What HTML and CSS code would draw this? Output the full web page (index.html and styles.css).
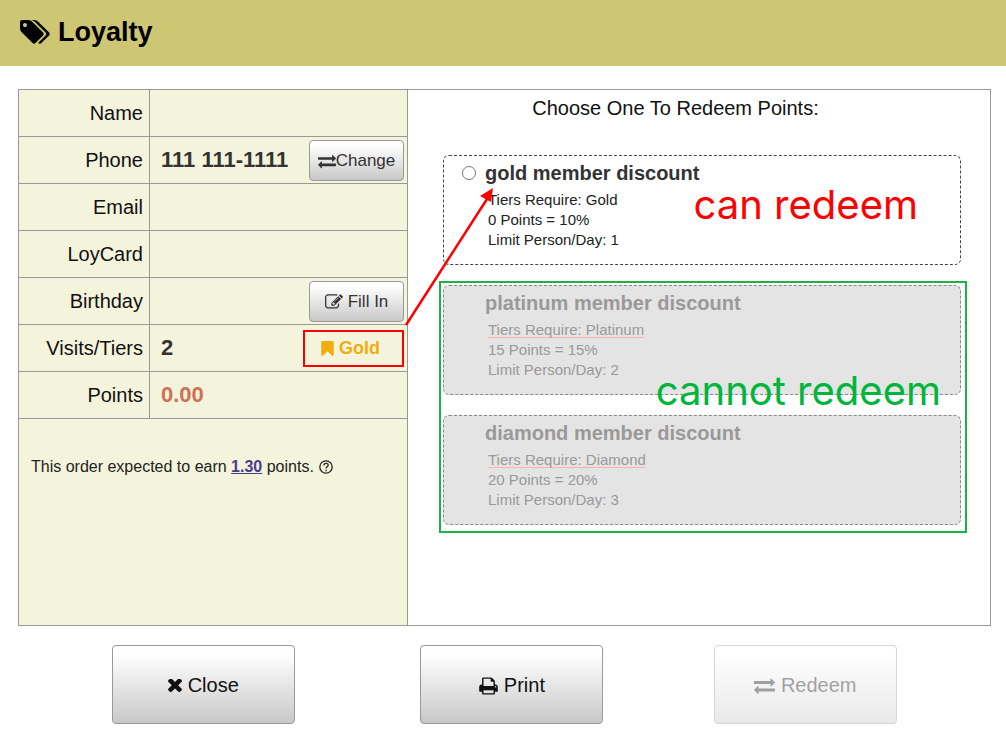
FILE: index.html
```
<!DOCTYPE html>
<html lang="en">
<head>
  <meta charset="UTF-8">
  <meta name="viewport" content="width=device-width, initial-scale=1.0">
  <title>Loyalty</title>
  <link rel="stylesheet" href="styles.css">
</head>
<body>
  <header class="header">
    <svg class="icon-tags" viewBox="0 0 1920 1792"><path d="M448 448q0-53-37.500-90.500t-90.500-37.500-90.500 37.500-37.500 90.500 37.500 90.500 90.500 37.500 90.500-37.500 37.500-90.500zm1067 576q0 53-37 90l-491 492q-39 37-91 37-53 0-90-37l-715-716q-38-37-64.500-101t-26.500-117v-416q0-52 38-90t90-38h416q53 0 117 26.500t102 64.500l715 714q37 39 37 91zm384 0q0 53-37 90l-491 492q-39 37-91 37-36 0-59-14t-53-45l470-470q37-37 37-90 0-52-37-91l-715-714q-38-38-102-64.500t-117-26.500h224q53 0 117 26.500t102 64.500l715 714q37 39 37 91z"/></svg>
    <h1>Loyalty</h1>
  </header>

  <main class="panel">
    <section class="member">
      <table class="info">
        <tr><th scope="row">Name</th><td></td></tr>
        <tr>
          <th scope="row">Phone</th>
          <td>
            <div class="value">
              <b>111 111-1111</b>
              <button class="btn btn-small" type="button">
                <svg class="icon-exchange" viewBox="0 0 1792 1792"><path d="M1792 1184v192q0 13-9.500 22.500t-22.500 9.500h-1376v192q0 13-9.500 22.500t-22.500 9.500q-12 0-24-10l-319-320q-9-9-9-22 0-14 9-23l320-320q9-9 23-9 13 0 22.500 9.500t9.500 22.500v192h1376q13 0 22.500 9.500t9.500 22.500zm0-544q0 14-9 23l-320 320q-9 9-23 9-13 0-22.500-9.500t-9.500-22.500v-192h-1376q-13 0-22.500-9.500t-9.500-22.500v-192q0-13 9.500-22.500t22.500-9.500h1376v-192q0-14 9-23t23-9q12 0 24 10l319 319q9 9 9 23z"/></svg><span>Change</span>
              </button>
            </div>
          </td>
        </tr>
        <tr><th scope="row">Email</th><td></td></tr>
        <tr><th scope="row">LoyCard</th><td></td></tr>
        <tr>
          <th scope="row">Birthday</th>
          <td>
            <div class="value">
              <b></b>
              <button class="btn btn-small btn-spaced" type="button">
                <svg class="icon-edit" viewBox="0 0 1792 1792"><path d="M888 1184l116-116-152-152-116 116v56h96v96h56zm440-720q-16-16-33 1l-350 350q-17 17-1 33t33-1l350-350q17-17 1-33zm80 594v190q0 119-84.500 203.500t-203.500 84.500h-832q-119 0-203.500-84.500t-84.500-203.500v-832q0-119 84.500-203.500t203.500-84.500h832q63 0 117 25 15 7 18 23 3 17-9 29l-49 49q-14 14-32 8-23-6-45-6h-832q-66 0-113 47t-47 113v832q0 66 47 113t113 47h832q66 0 113-47t47-113v-126q0-13 9-22l64-64q15-15 35-7t20 29zm-96-738l288 288-672 672h-288v-288zm444 132l-92 92-288-288 92-92q28-28 68-28t68 28l152 152q28 28 28 68t-28 68z"/></svg><span>Fill In</span>
              </button>
            </div>
          </td>
        </tr>
        <tr>
          <th scope="row">Visits/Tiers</th>
          <td>
            <div class="value">
              <b>2</b>
              <span class="tier">
                <svg class="icon-bookmark" viewBox="256 128 1280 1536"><path d="M1420 128q23 0 44 9 33 13 52.500 41t19.500 62v1289q0 34-19.500 62t-52.500 41q-19 8-44 8-48 0-83-32l-441-424-441 424q-36 33-83 33-23 0-44-9-33-13-52.500-41t-19.500-62v-1289q0-34 19.500-62t52.500-41q21-9 44-9h1048z"/></svg>
                Gold
              </span>
            </div>
          </td>
        </tr>
        <tr><th scope="row">Points</th><td><div class="value"><b class="points">0.00</b></div></td></tr>
      </table>
      <p class="earn">This order expected to earn <a href="#">1.30</a> points.
        <svg class="icon-help" viewBox="0 0 14 14"><circle cx="7" cy="7" r="6.200"/><path d="M4.900 5.500c0-2.900 4.300-2.700 4.300-.2 0 1.500-2.100 1.500-2.100 3.200M7.100 9.700v1.500"/></svg>
      </p>
    </section>

    <section class="redeem">
      <h2>Choose One To Redeem Points:</h2>

      <div class="offer">
        <input type="radio" name="offer" id="offer-gold">
        <label for="offer-gold">gold member discount</label>
        <ul>
          <li>Tiers Require: Gold</li>
          <li>0 Points = 10%</li>
          <li>Limit Person/Day: 1</li>
        </ul>
        <svg class="arrow" viewBox="0 0 92 142"><path class="arrow-line" d="M2 140L83 14"/><path class="arrow-head" d="M89 3L87 17L76 11z"/></svg>
        <span class="note note-can">can redeem</span>
      </div>

      <div class="locked">
        <div class="offer offer-off">
          <h3>platinum member discount</h3>
          <ul>
            <li><span class="missing">Tiers Require: Platinum</span></li>
            <li>15 Points = 15%</li>
            <li>Limit Person/Day: 2</li>
          </ul>
        </div>
        <div class="offer offer-off">
          <h3>diamond member discount</h3>
          <ul>
            <li><span class="missing">Tiers Require: Diamond</span></li>
            <li>20 Points = 20%</li>
            <li>Limit Person/Day: 3</li>
          </ul>
        </div>
        <span class="note note-cannot">cannot redeem</span>
      </div>
    </section>
  </main>

  <footer class="actions">
    <button class="btn btn-large" type="button">
      <svg class="icon-times" viewBox="302 430 1188 1188"><path transform="translate(0 -4)" d="M1490 1322q0 40-28 68l-136 136q-28 28-68 28t-68-28l-294-294-294 294q-28 28-68 28t-68-28l-136-136q-28-28-28-68t28-68l294-294-294-294q-28-28-28-68t28-68l136-136q28-28 68-28t68 28l294 294 294-294q28-28 68-28t68 28l136 136q28 28 28 68t-28 68l-294 294 294 294q28 28 28 68z"/></svg>
      <span>Close</span>
    </button>
    <button class="btn btn-large" type="button">
      <svg class="icon-print" viewBox="64 0 1664 1792"><path d="M448 1536h896v-256h-896v256zm0-640h896v-384h-160q-40 0-68-28t-28-68v-160h-640v640zm1152 64q0-26-19-45t-45-19-45 19-19 45 19 45 45 19 45-19 19-45zm128 0v416q0 13-9.500 22.500t-22.500 9.500h-224v160q0 40-28 68t-68 28h-960q-40 0-68-28t-28-68v-160h-224q-13 0-22.500-9.500t-9.500-22.500v-416q0-79 56.500-135.500t135.500-56.500h64v-544q0-40 28-68t68-28h672q40 0 88 20t76 48l152 152q28 28 48 76t20 88v256h64q79 0 135.500 56.500t56.500 135.500z"/></svg>
      <span>Print</span>
    </button>
    <button class="btn btn-large" type="button" disabled>
      <svg class="icon-exchange" viewBox="0 0 1792 1792"><path d="M1792 1184v192q0 13-9.500 22.500t-22.500 9.500h-1376v192q0 13-9.500 22.500t-22.500 9.500q-12 0-24-10l-319-320q-9-9-9-22 0-14 9-23l320-320q9-9 23-9 13 0 22.500 9.500t9.500 22.500v192h1376q13 0 22.500 9.500t9.500 22.500zm0-544q0 14-9 23l-320 320q-9 9-23 9-13 0-22.500-9.500t-9.500-22.500v-192h-1376q-13 0-22.500-9.500t-9.500-22.500v-192q0-13 9.500-22.500t22.500-9.500h1376v-192q0-14 9-23t23-9q12 0 24 10l319 319q9 9 9 23z"/></svg>
      <span>Redeem</span>
    </button>
  </footer>
</body>
</html>
```
FILE: styles.css
```
* {
  box-sizing: border-box;
}
body {
  margin: 0;
  background: #fff;
  color: #111;
  font-family: "Liberation Sans", Helvetica, Arial, sans-serif;
  font-size: 20px;
}
h1, h2, h3, p, ul {
  margin: 0;
  padding: 0;
}
svg {
  fill: currentColor;
  flex: none;
}

.header {
  display: flex;
  align-items: center;
  gap: 8px;
  padding: 14px 20px 16px;
  background: #cdc673;
  color: #000;
}
.header h1 {
  font-size: 27px;
  line-height: 36px;
}
.icon-tags {
  width: 30px;
  height: 28px;
}

/* main panel */
.panel {
  display: grid;
  grid-template-columns: 389px 1fr;
  margin: 23px 15px 0 18px;
  min-height: 537px;
  border: 1px solid #999;
}
.member {
  background: #f4f4dc;
  border-right: 1px solid #999;
}
.info {
  width: 100%;
  border-collapse: separate;
  border-spacing: 0;
}
.info th,
.info td {
  height: 47px;
  padding: 0;
  border-bottom: 1px solid #999;
}
.info th {
  width: 131px;
  padding-right: 6px;
  border-right: 1px solid #999;
  font-weight: normal;
  text-align: right;
}
.value {
  display: flex;
  align-items: center;
  justify-content: space-between;
  padding: 0 3px 0 11px;
  color: #333;
  font-size: 22px;
}
.value .points {
  color: #cf6f55;
}
.tier {
  display: flex;
  align-items: center;
  justify-content: center;
  gap: 5px;
  width: 101px;
  height: 37px;
  padding-right: 6px;
  border: 2px solid #f00;
  color: #f0ad0e;
  font-size: 18px;
  font-weight: bold;
}
.icon-bookmark {
  width: 13px;
  height: 15px;
}
.earn {
  padding: 38px 12px;
  color: #222;
  font-size: 16px;
  line-height: 20px;
}
.earn a {
  color: #483d8b;
  font-weight: bold;
}
.icon-help {
  width: 14px;
  height: 14px;
  margin-left: 1px;
  fill: none;
  stroke: currentColor;
  stroke-width: 1.3;
  vertical-align: -2px;
}

/* buttons */
.btn {
  display: flex;
  align-items: center;
  justify-content: center;
  padding: 2px 0 0;
  border: 1px solid #999;
  border-radius: 4px;
  background: linear-gradient(#fff 10%, #c8c8c8);
  color: #111;
  font-family: inherit;
}
.btn-small {
  width: 95px;
  height: 41px;
  color: #333;
  font-size: 17px;
}
.btn-spaced {
  gap: 5px;
}
.btn-large {
  gap: 6px;
  width: 183px;
  height: 79px;
  font-size: 20px;
}
.btn:disabled {
  opacity: 0.4;
}
.icon-exchange,
.icon-edit {
  width: 18px;
  height: 18px;
}
.btn-large .icon-exchange {
  width: 21px;
  height: 21px;
}
.icon-times {
  width: 14px;
  height: 14px;
}
.icon-print {
  width: 19px;
  height: 20px;
}

/* offers */
.redeem {
  padding: 6px 29px 0 35px;
}
.redeem h2 {
  margin-bottom: 35px;
  padding-right: 53px;
  font-size: 20px;
  font-weight: normal;
  line-height: 24px;
  text-align: center;
}
.offer {
  position: relative;
  min-height: 110px;
  margin-bottom: 20px;
  padding: 5px 0 0 41px;
  border: 1px dashed #444;
  border-radius: 6px;
}
.offer input {
  position: absolute;
  left: 18px;
  top: 10px;
  width: 14px;
  height: 14px;
  margin: 0;
}
.offer label,
.offer h3 {
  display: block;
  color: #333;
  font-size: 20px;
  font-weight: bold;
  line-height: 24px;
}
.offer ul {
  padding: 5px 0 0 3px;
  color: #222;
  font-size: 15px;
  line-height: 20px;
  list-style: none;
}
.offer-off {
  background: #e4e4e4;
  border-color: #888;
}
.offer-off h3,
.offer-off ul {
  color: #999;
}
.missing {
  text-decoration: underline 1px #ffb3ad;
  text-decoration-skip-ink: none;
  text-underline-offset: 2px;
}

/* callouts drawn over the offers */
.locked {
  position: relative;
}
.locked::after {
  content: "";
  position: absolute;
  inset: -4px -6px -8px -4px;
  border: 2px solid #1cb441;
}
.locked .offer:nth-child(2) {
  margin-bottom: 0;
}
.note {
  position: absolute;
  font-family: Inter, Roboto, sans-serif;
  font-size: 40px;
  line-height: 50px;
  white-space: nowrap;
}
.note-can {
  right: 42px;
  top: 24px;
  color: #f00;
}
.note-cannot {
  right: 20px;
  top: 81px;
  color: #00b53c;
}
.arrow {
  position: absolute;
  left: -40px;
  top: 29px;
  width: 92px;
  height: 142px;
  z-index: 1;
}
.arrow-line {
  stroke: #f00;
  stroke-width: 2.5;
}
.arrow-head {
  fill: #f00;
}

.actions {
  display: grid;
  grid-template-columns: 12fr 8fr 11fr;
  justify-items: center;
  padding: 19px 31px 11px 18px;
}
```
